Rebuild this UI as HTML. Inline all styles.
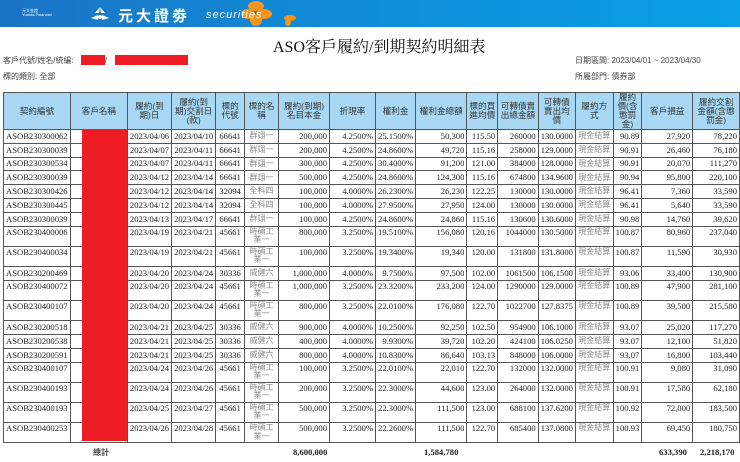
<!DOCTYPE html>
<html><head><meta charset="utf-8"><style>
*{margin:0;padding:0;box-sizing:border-box}
body{width:740px;height:462px;background:#fff;position:relative;overflow:hidden;font-family:"Liberation Serif","Noto Serif CJK SC",serif;color:#222}
.banner{position:absolute;left:0;top:0;width:740px;height:27px;background:linear-gradient(90deg,#1a73c4 0%,#1189d6 40%,#0aa0e6 100%)}
.t{position:absolute;white-space:nowrap}
.cjk{font-family:"Liberation Sans","Noto Sans CJK TC",sans-serif}
table{position:absolute;left:3px;top:92px;border-collapse:collapse;table-layout:fixed;font-size:8.6px}
td,th{border:1px solid #555;padding:0 2px;overflow:hidden;white-space:nowrap;line-height:9px}
th{background:#a9d8f5;font-weight:normal;font-family:"Liberation Sans","Noto Sans CJK TC",sans-serif;white-space:normal;text-align:center;height:37px;color:#333;font-size:8.6px}
td{text-align:right;height:13.8px;vertical-align:middle}
tr.d td{height:20.2px;vertical-align:top;padding-top:1px}
td.l{text-align:left}
td.c{text-align:center}
td.g{color:#888;font-family:"Liberation Sans","Noto Sans CJK TC",sans-serif;text-align:center;white-space:normal;font-size:8px;line-height:8.5px}
.red{position:absolute;left:82px;top:129px;width:45px;height:312px;background:#ee1c25}
</style></head><body>
<div class="banner">
<div class="t cjk" style="left:22px;top:9px;color:#fff;font-size:4px;line-height:4px">元大金控<br>Yuanta Financial</div>
<svg style="position:absolute;left:89px;top:6px" width="22" height="16" viewBox="0 0 22 16"><path d="M11 1 L6 7 L10 7Z M11 1 L16 7 L12 7Z M2 12 L9 9 L9 14Z M20 12 L13 9 L13 14Z" fill="#fff"/><circle cx="11" cy="11" r="2" fill="#fff"/></svg>
<div class="t cjk" style="left:118px;top:5px;color:#fff;font-size:15px;font-weight:bold;letter-spacing:3px">元大證劵</div>
<svg style="position:absolute;left:226px;top:0" width="80" height="27" viewBox="0 0 80 27"><g fill="#f7941d"><ellipse cx="30" cy="6" rx="8" ry="5"/><ellipse cx="22" cy="14" rx="7" ry="5"/><ellipse cx="38" cy="14" rx="8" ry="5"/><ellipse cx="30" cy="20" rx="6" ry="6"/><ellipse cx="64" cy="18" rx="6" ry="3"/><ellipse cx="62" cy="22" rx="3" ry="4"/></g></svg>
<div class="t" style="left:206px;top:9px;color:#fff;font-size:11px;font-style:italic;font-family:'Liberation Sans',sans-serif;letter-spacing:1px">securities</div>
</div>
<div class="t" style="left:273px;top:34px;font-size:16px;color:#111">ASO客戶履約/到期契約明細表</div>
<div class="t cjk" style="left:3px;top:55px;font-size:8px;color:#444">客戶代號/姓名/統編: &nbsp;&nbsp;&nbsp;&nbsp;&nbsp;&nbsp;&nbsp;&nbsp;&nbsp;&nbsp;&nbsp;&nbsp;&nbsp;/</div>
<div style="position:absolute;left:81px;top:55px;width:24px;height:10px;background:#ee1c25"></div>
<div style="position:absolute;left:115px;top:55px;width:73px;height:10px;background:#ee1c25"></div>
<div class="t cjk" style="left:3px;top:71px;font-size:8px;color:#444">標的類別: 全部</div>
<div class="t cjk" style="left:575px;top:55px;font-size:8px;color:#444">日期區間: 2023/04/01 ~ 2023/04/30</div>
<div class="t cjk" style="left:575px;top:71px;font-size:8px;color:#444">所屬部門: 債券部</div>
<table>
<colgroup><col style="width:67px"><col style="width:61px"><col style="width:42px"><col style="width:41px"><col style="width:29px"><col style="width:36px"><col style="width:52px"><col style="width:47px"><col style="width:34px"><col style="width:53px"><col style="width:31px"><col style="width:41px"><col style="width:35px"><col style="width:40px"><col style="width:25px"><col style="width:53px"><col style="width:48px"></colgroup>
<tr><th>契約編號</th><th>客戶名稱</th><th>履約(到期)日</th><th>履約(到期)交割日(款)</th><th>標的代號</th><th>標的名稱</th><th>履約(到期)名目本金</th><th>折現率</th><th>權利金</th><th>權利金總額</th><th>標的買進均價</th><th>可轉債賣出總金額</th><th>可轉債賣出均價</th><th>履約方式</th><th>履約價(含懲罰金)</th><th>客戶損益</th><th>履約交割金額(含懲罰金)</th></tr>
<tr><td class="l">ASOB230300062</td><td></td><td>2023/04/06</td><td>2023/04/10</td><td class="c">66641</td><td class="g">群翊一</td><td>200,000</td><td>4.2500%</td><td>25.1500%</td><td>50,300</td><td>115.50</td><td>260000</td><td>130.0000</td><td class="g">現金結算</td><td>90.89</td><td>27,920</td><td>78,220</td></tr>
<tr><td class="l">ASOB230300039</td><td></td><td>2023/04/07</td><td>2023/04/11</td><td class="c">66641</td><td class="g">群翊一</td><td>200,000</td><td>4.2500%</td><td>24.8600%</td><td>49,720</td><td>115.16</td><td>258000</td><td>129.0000</td><td class="g">現金結算</td><td>90.91</td><td>26,460</td><td>76,180</td></tr>
<tr><td class="l">ASOB230300534</td><td></td><td>2023/04/07</td><td>2023/04/11</td><td class="c">66641</td><td class="g">群翊一</td><td>300,000</td><td>4.2500%</td><td>30.4000%</td><td>91,200</td><td>121.00</td><td>384000</td><td>128.0000</td><td class="g">現金結算</td><td>90.91</td><td>20,070</td><td>111,270</td></tr>
<tr><td class="l">ASOB230300039</td><td></td><td>2023/04/12</td><td>2023/04/14</td><td class="c">66641</td><td class="g">群翊一</td><td>500,000</td><td>4.2500%</td><td>24.8600%</td><td>124,300</td><td>115.16</td><td>674800</td><td>134.9600</td><td class="g">現金結算</td><td>90.94</td><td>95,800</td><td>220,100</td></tr>
<tr><td class="l">ASOB230300426</td><td></td><td>2023/04/12</td><td>2023/04/14</td><td class="c">32094</td><td class="g">全科四</td><td>100,000</td><td>4.0000%</td><td>26.2300%</td><td>26,230</td><td>122.25</td><td>130000</td><td>130.0000</td><td class="g">現金結算</td><td>96.41</td><td>7,360</td><td>33,590</td></tr>
<tr><td class="l">ASOB230300445</td><td></td><td>2023/04/12</td><td>2023/04/14</td><td class="c">32094</td><td class="g">全科四</td><td>100,000</td><td>4.0000%</td><td>27.9500%</td><td>27,950</td><td>124.00</td><td>130000</td><td>130.0000</td><td class="g">現金結算</td><td>96.41</td><td>5,640</td><td>33,590</td></tr>
<tr><td class="l">ASOB230300039</td><td></td><td>2023/04/13</td><td>2023/04/17</td><td class="c">66641</td><td class="g">群翊一</td><td>100,000</td><td>4.2500%</td><td>24.8600%</td><td>24,860</td><td>115.16</td><td>130600</td><td>130.6000</td><td class="g">現金結算</td><td>90.98</td><td>14,760</td><td>39,620</td></tr>
<tr class="d"><td class="l">ASOB230400006</td><td></td><td>2023/04/19</td><td>2023/04/21</td><td class="c">45661</td><td class="g">時碩工業一</td><td>800,000</td><td>3.2500%</td><td>19.5100%</td><td>156,080</td><td>120.16</td><td>1044000</td><td>130.5000</td><td class="g">現金結算</td><td>100.87</td><td>80,960</td><td>237,040</td></tr>
<tr class="d"><td class="l">ASOB230400034</td><td></td><td>2023/04/19</td><td>2023/04/21</td><td class="c">45661</td><td class="g">時碩工業一</td><td>100,000</td><td>3.2500%</td><td>19.3400%</td><td>19,340</td><td>120.00</td><td>131800</td><td>131.8000</td><td class="g">現金結算</td><td>100.87</td><td>11,590</td><td>30,930</td></tr>
<tr><td class="l">ASOB230200469</td><td></td><td>2023/04/20</td><td>2023/04/24</td><td class="c">30336</td><td class="g">威健六</td><td>1,000,000</td><td>4.0000%</td><td>9.7500%</td><td>97,500</td><td>102.00</td><td>1061500</td><td>106.1500</td><td class="g">現金結算</td><td>93.06</td><td>33,400</td><td>130,900</td></tr>
<tr class="d"><td class="l">ASOB230400072</td><td></td><td>2023/04/20</td><td>2023/04/24</td><td class="c">45661</td><td class="g">時碩工業一</td><td>1,000,000</td><td>3.2500%</td><td>23.3200%</td><td>233,200</td><td>124.00</td><td>1290000</td><td>129.0000</td><td class="g">現金結算</td><td>100.89</td><td>47,900</td><td>281,100</td></tr>
<tr class="d"><td class="l">ASOB230400107</td><td></td><td>2023/04/20</td><td>2023/04/24</td><td class="c">45661</td><td class="g">時碩工業一</td><td>800,000</td><td>3.2500%</td><td>22.0100%</td><td>176,080</td><td>122.70</td><td>1022700</td><td>127.8375</td><td class="g">現金結算</td><td>100.89</td><td>39,500</td><td>215,580</td></tr>
<tr><td class="l">ASOB230200518</td><td></td><td>2023/04/21</td><td>2023/04/25</td><td class="c">30336</td><td class="g">威健六</td><td>900,000</td><td>4.0000%</td><td>10.2500%</td><td>92,250</td><td>102.50</td><td>954900</td><td>106.1000</td><td class="g">現金結算</td><td>93.07</td><td>25,020</td><td>117,270</td></tr>
<tr><td class="l">ASOB230200538</td><td></td><td>2023/04/21</td><td>2023/04/25</td><td class="c">30336</td><td class="g">威健六</td><td>400,000</td><td>4.0000%</td><td>9.9300%</td><td>39,720</td><td>102.20</td><td>424100</td><td>106.0250</td><td class="g">現金結算</td><td>93.07</td><td>12,100</td><td>51,820</td></tr>
<tr><td class="l">ASOB230200591</td><td></td><td>2023/04/21</td><td>2023/04/25</td><td class="c">30336</td><td class="g">威健六</td><td>800,000</td><td>4.0000%</td><td>10.8300%</td><td>86,640</td><td>103.13</td><td>848000</td><td>106.0000</td><td class="g">現金結算</td><td>93.07</td><td>16,800</td><td>103,440</td></tr>
<tr class="d"><td class="l">ASOB230400107</td><td></td><td>2023/04/24</td><td>2023/04/26</td><td class="c">45661</td><td class="g">時碩工業一</td><td>100,000</td><td>3.2500%</td><td>22.0100%</td><td>22,010</td><td>122.70</td><td>132000</td><td>132.0000</td><td class="g">現金結算</td><td>100.91</td><td>9,080</td><td>31,090</td></tr>
<tr class="d"><td class="l">ASOB230400193</td><td></td><td>2023/04/24</td><td>2023/04/26</td><td class="c">45661</td><td class="g">時碩工業一</td><td>200,000</td><td>3.2500%</td><td>22.3000%</td><td>44,600</td><td>123.00</td><td>264000</td><td>132.0000</td><td class="g">現金結算</td><td>100.91</td><td>17,580</td><td>62,180</td></tr>
<tr class="d"><td class="l">ASOB230400193</td><td></td><td>2023/04/25</td><td>2023/04/27</td><td class="c">45661</td><td class="g">時碩工業一</td><td>500,000</td><td>3.2500%</td><td>22.3000%</td><td>111,500</td><td>123.00</td><td>688100</td><td>137.6200</td><td class="g">現金結算</td><td>100.92</td><td>72,000</td><td>183,500</td></tr>
<tr class="d"><td class="l">ASOB230400253</td><td></td><td>2023/04/26</td><td>2023/04/28</td><td class="c">45661</td><td class="g">時碩工業一</td><td>500,000</td><td>3.2500%</td><td>22.2600%</td><td>111,500</td><td>122.70</td><td>685400</td><td>137.0800</td><td class="g">現金結算</td><td>100.93</td><td>69,450</td><td>180,750</td></tr>
</table>
<div class="red"></div>
<div class="t cjk" style="left:93px;top:447px;font-size:8px;font-weight:bold;color:#444">總計</div>
<div class="t" style="left:293px;top:447px;font-size:8.6px;font-weight:bold">8,600,000</div>
<div class="t" style="left:424px;top:447px;font-size:8.6px;font-weight:bold">1,584,780</div>
<div class="t" style="left:659px;top:447px;font-size:8.6px;font-weight:bold">633,390</div>
<div class="t" style="left:700px;top:447px;font-size:8.6px;font-weight:bold">2,218,170</div>
</body></html>
